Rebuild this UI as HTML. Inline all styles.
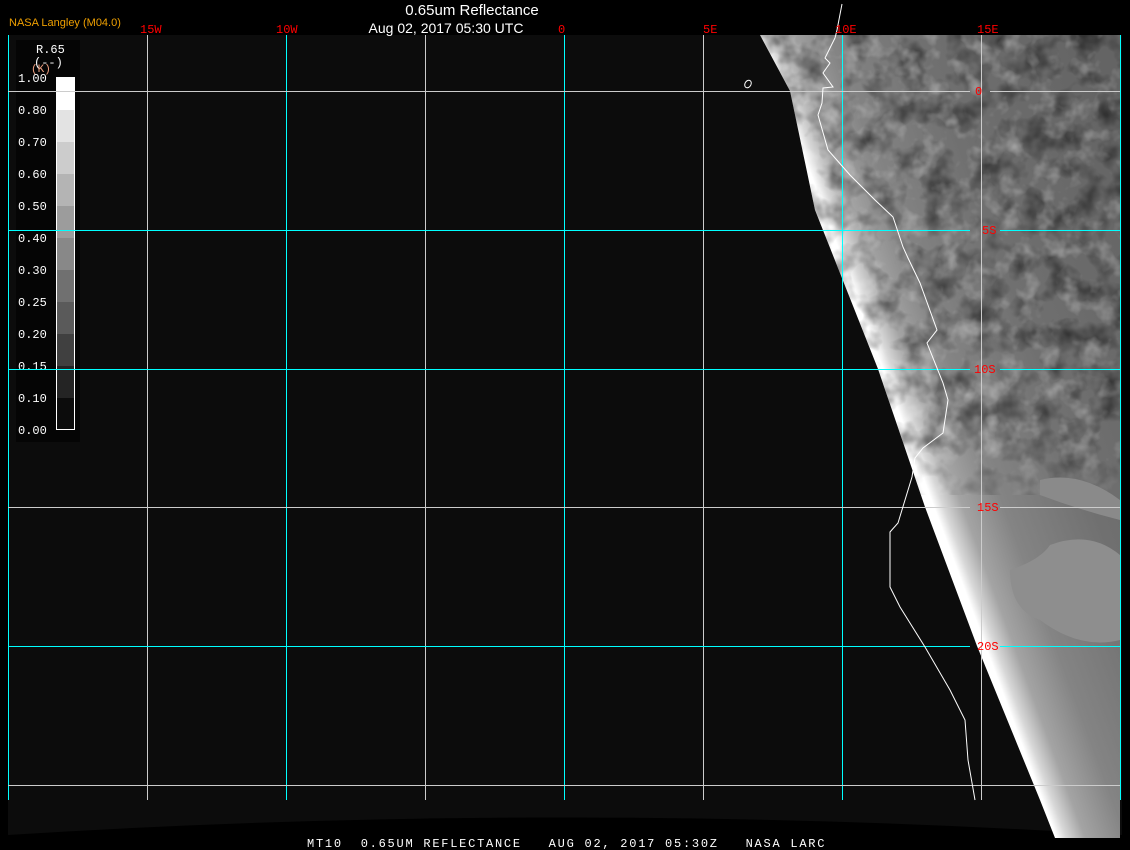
<!DOCTYPE html>
<html><head><meta charset="utf-8"><style>
html,body{margin:0;padding:0;background:#000;width:1130px;height:850px;overflow:hidden}
svg{display:block}
</style></head><body>
<svg width="1130" height="850" viewBox="0 0 1130 850" xmlns="http://www.w3.org/2000/svg">
<defs>
<clipPath id="sat"><polygon points="760,35 1120,35 1120,838 1055,838 1040,800 977,646 925,507 878,369 815,210 790,91"/></clipPath>
<linearGradient id="g" gradientUnits="userSpaceOnUse" x1="900" y1="415" x2="1181" y2="311">
<stop offset="0" stop-color="#fff"/><stop offset="0.03" stop-color="#d8d8d8"/><stop offset="0.09" stop-color="#a4a4a4"/><stop offset="0.22" stop-color="#848484"/><stop offset="0.5" stop-color="#707070"/><stop offset="1" stop-color="#646464"/></linearGradient>
<filter id="t" x="0" y="0" width="1" height="1"><feTurbulence type="fractalNoise" baseFrequency="0.04" numOctaves="3" seed="3"/><feColorMatrix type="matrix" values="0 0 0 0 0  0 0 0 0 0  0 0 0 0 0  0 0 0 -2.2 1.25"/></filter>
<filter id="t2" x="0" y="0" width="1" height="1"><feTurbulence type="fractalNoise" baseFrequency="0.05" numOctaves="3" seed="8"/><feColorMatrix type="matrix" values="0 0 0 0 1  0 0 0 0 1  0 0 0 0 1  0 0 0 -2.4 1.2"/></filter>
<linearGradient id="fade" x1="0" y1="0" x2="0" y2="1"><stop offset="0" stop-color="#fff"/><stop offset="0.5" stop-color="#fff"/><stop offset="0.62" stop-color="#000"/></linearGradient>
<mask id="m"><rect x="760" y="35" width="360" height="800" fill="url(#fade)"/></mask>
</defs>
<rect x="8" y="35" width="1114" height="800" fill="#0c0c0c"/>
<path d="M8,835 Q560,800 1122,835 L1122,850 L8,850Z" fill="#000"/>
<g clip-path="url(#sat)">
<rect x="750" y="35" width="380" height="810" fill="url(#g)"/>
<g mask="url(#m)">
<rect x="760" y="35" width="360" height="460" filter="url(#t)" opacity="0.5"/>
<rect x="760" y="35" width="360" height="460" filter="url(#t2)" opacity="0.35"/>
</g>
<path d="M1010,570 Q1040,560 1050,545 Q1090,530 1120,555 L1120,640 Q1080,650 1040,620 Q1010,610 1010,570Z" fill="#8e8e8e"/>
<path d="M1040,480 Q1080,470 1120,500 L1120,520 Q1080,510 1040,495Z" fill="#8a8a8a"/>
</g>
<rect x="16" y="40" width="64" height="402" fill="#050505"/>
<g>
<rect x="56" y="77" width="19" height="33" fill="#fff"/>
<rect x="56" y="110" width="19" height="32" fill="#e3e3e3"/>
<rect x="56" y="142" width="19" height="32" fill="#cccccc"/>
<rect x="56" y="174" width="19" height="32" fill="#b4b4b4"/>
<rect x="56" y="206" width="19" height="32" fill="#9c9c9c"/>
<rect x="56" y="238" width="19" height="32" fill="#888"/>
<rect x="56" y="270" width="19" height="32" fill="#707070"/>
<rect x="56" y="302" width="19" height="32" fill="#5a5a5a"/>
<rect x="56" y="334" width="19" height="32" fill="#404040"/>
<rect x="56" y="366" width="19" height="32" fill="#242424"/>
<rect x="56" y="398" width="19" height="32" fill="#0c0c0c"/>
<rect x="56.5" y="77.5" width="18" height="352" fill="none" stroke="#fff" stroke-width="1"/>
</g>
<g font-family="Liberation Mono, monospace" font-size="12" fill="#fff">
<text x="36" y="53">R.65</text><text x="34" y="66">(--)</text>
<text x="31" y="72" fill="#f0a080" font-size="11">(K)</text>
<text x="18" y="82">1.00</text><text x="18" y="114">0.80</text><text x="18" y="146">0.70</text><text x="18" y="178">0.60</text><text x="18" y="210">0.50</text><text x="18" y="242">0.40</text><text x="18" y="274">0.30</text><text x="18" y="306">0.25</text><text x="18" y="338">0.20</text><text x="18" y="370">0.15</text><text x="18" y="402">0.10</text><text x="18" y="434">0.00</text>
</g>
<g stroke-width="1" fill="none">
<line x1="8.5" y1="35" x2="8.5" y2="800" stroke="#0ff"/>
<line x1="147.5" y1="35" x2="147.5" y2="800" stroke="#ccc"/>
<line x1="286.5" y1="35" x2="286.5" y2="800" stroke="#0ff"/>
<line x1="425.5" y1="35" x2="425.5" y2="800" stroke="#ccc"/>
<line x1="564.5" y1="35" x2="564.5" y2="800" stroke="#0ff"/>
<line x1="703.5" y1="35" x2="703.5" y2="800" stroke="#ccc"/>
<line x1="842.5" y1="35" x2="842.5" y2="800" stroke="#0ff"/>
<line x1="981.5" y1="35" x2="981.5" y2="800" stroke="#ccc"/>
<line x1="1120.5" y1="35" x2="1120.5" y2="800" stroke="#0ff"/>
<line x1="8" y1="91.5" x2="970" y2="91.5" stroke="#ccc"/><line x1="990" y1="91.5" x2="1120" y2="91.5" stroke="#ccc"/>
<line x1="8" y1="230.5" x2="970" y2="230.5" stroke="#0ff"/><line x1="1000" y1="230.5" x2="1120" y2="230.5" stroke="#0ff"/>
<line x1="8" y1="369.5" x2="970" y2="369.5" stroke="#0ff"/><line x1="1000" y1="369.5" x2="1120" y2="369.5" stroke="#0ff"/>
<line x1="8" y1="507.5" x2="970" y2="507.5" stroke="#ccc"/><line x1="1000" y1="507.5" x2="1120" y2="507.5" stroke="#ccc"/>
<line x1="8" y1="646.5" x2="970" y2="646.5" stroke="#0ff"/><line x1="1000" y1="646.5" x2="1120" y2="646.5" stroke="#0ff"/>
<line x1="8" y1="785.5" x2="1120" y2="785.5" stroke="#ccc"/>
</g>
<path d="M842,4 L837,30 L835,38 L825,58 L830,63 L823,73 L833,87 L823,88 L822,103 L818,115 L828,150 L850,175 L870,195 L875,200 L893,217 L903,247 L908,258 L920,283 L937,330 L927,343 L943,383 L948,400 L943,433 L923,448 L915,458 L912,477 L898,523 L890,532 L890,587 L900,607 L925,647 L950,690 L965,720 L968,760 L975,800" fill="none" stroke="#fff" stroke-width="1"/>
<ellipse cx="748" cy="84" rx="3" ry="4" fill="none" stroke="#fff" transform="rotate(30 748 84)"/>
<g font-family="Liberation Mono, monospace" font-size="12" fill="#f00">
<text x="140" y="33">15W</text><text x="276" y="33">10W</text><text x="558" y="33">0</text><text x="703" y="33">5E</text><text x="835" y="33">10E</text><text x="977" y="33">15E</text>
<text x="975" y="95">0</text><text x="982" y="234">5S</text><text x="974" y="373">10S</text><text x="977" y="511">15S</text><text x="977" y="650">20S</text>
</g>
<text x="9" y="26" font-family="Liberation Sans, sans-serif" font-size="11" fill="#f0a000">NASA Langley (M04.0)</text>
<text x="472" y="15" text-anchor="middle" font-family="Liberation Sans, sans-serif" font-size="15" fill="#fff">0.65um Reflectance</text>
<text x="446" y="33" text-anchor="middle" font-family="Liberation Sans, sans-serif" font-size="14" fill="#fff">Aug 02, 2017 05:30 UTC</text>
<text x="307" y="847" font-family="Liberation Mono, monospace" font-size="12" fill="#fff" letter-spacing="1.75" style="white-space:pre" xml:space="preserve">MT10  0.65UM REFLECTANCE   AUG 02, 2017 05:30Z   NASA LARC</text>
</svg>
</body></html>
